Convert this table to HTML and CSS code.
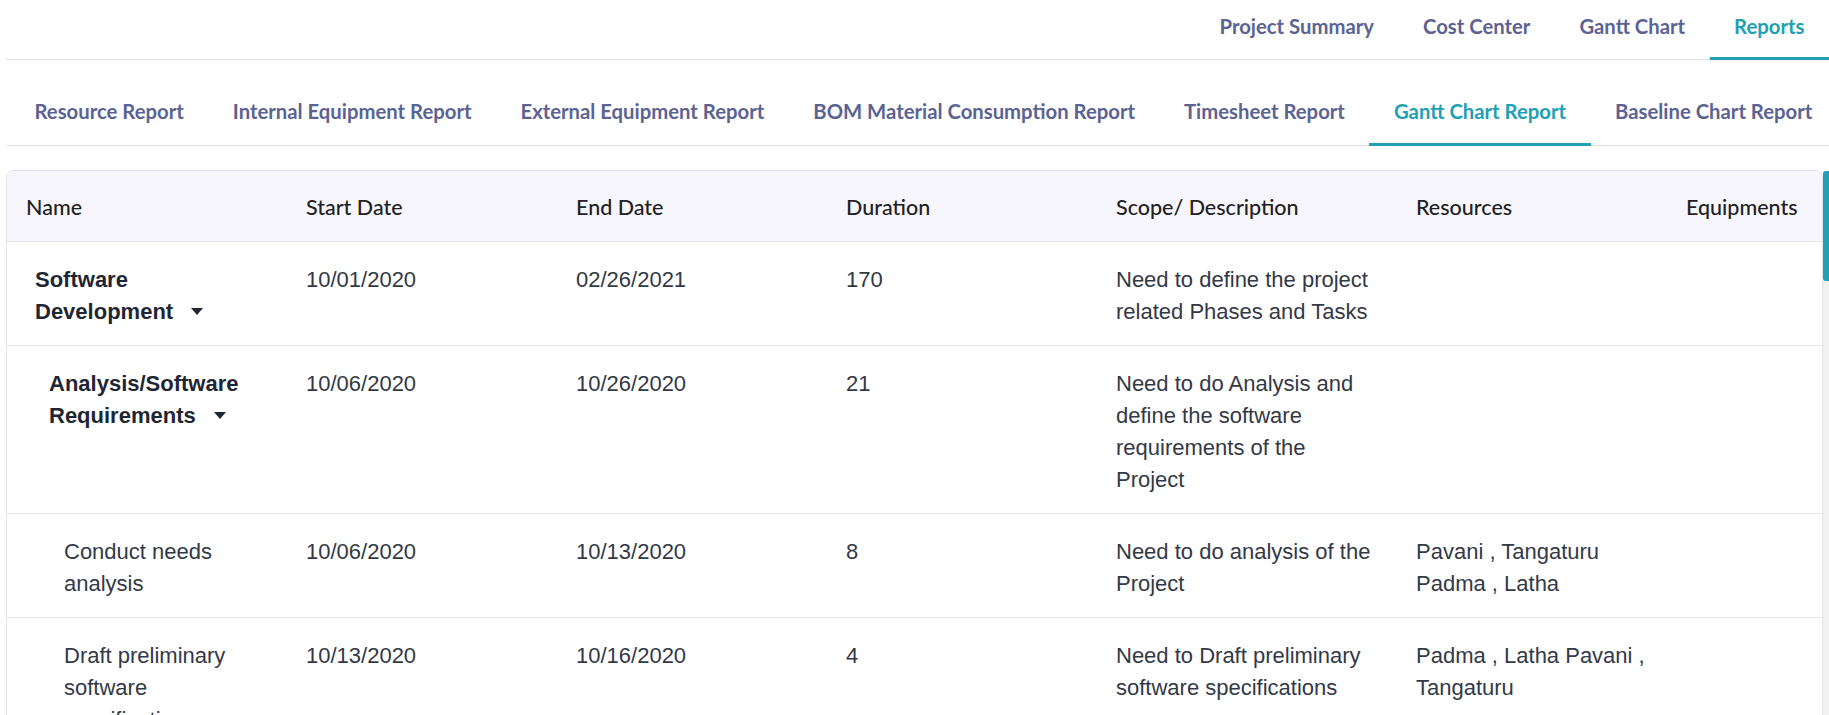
FILE: index.html
```html
<!DOCTYPE html>
<html lang="en">
<head>
<meta charset="utf-8">
<title>Gantt Chart Report</title>
<link rel="stylesheet" href="styles.css">
</head>
<body>
<div class="page">
  <nav class="main-nav">
    <a class="tab">Project Summary</a>
    <a class="tab">Cost Center</a>
    <a class="tab">Gantt Chart</a>
    <a class="tab active">Reports</a>
  </nav>
  <nav class="sub-nav">
    <a class="tab">Resource Report</a>
    <a class="tab">Internal Equipment Report</a>
    <a class="tab">External Equipment Report</a>
    <a class="tab">BOM Material Consumption Report</a>
    <a class="tab">Timesheet Report</a>
    <a class="tab active">Gantt Chart Report</a>
    <a class="tab">Baseline Chart Report</a>
  </nav>
  <div class="table-area">
    <div class="card">
      <table class="grid">
        <colgroup>
          <col class="c-name"><col class="c-date"><col class="c-date"><col class="c-dur"><col class="c-desc"><col class="c-res"><col class="c-eq">
        </colgroup>
        <thead>
          <tr>
            <th class="name-cell">Name</th>
            <th>Start Date</th>
            <th>End Date</th>
            <th>Duration</th>
            <th>Scope/ Description</th>
            <th>Resources</th>
            <th>Equipments</th>
          </tr>
        </thead>
        <tbody>
          <tr>
            <td class="name-cell"><div class="lvl lvl0 parent">Software Development<svg class="caret" viewBox="0 0 12 7" width="12" height="7"><path d="M0 0H12L6 7Z"/></svg></div></td>
            <td>10/01/2020</td>
            <td>02/26/2021</td>
            <td>170</td>
            <td class="desc-cell">Need to define the project related Phases and Tasks</td>
            <td></td>
            <td></td>
          </tr>
          <tr>
            <td class="name-cell"><div class="lvl lvl1 parent">Analysis/Software Requirements<svg class="caret" viewBox="0 0 12 7" width="12" height="7"><path d="M0 0H12L6 7Z"/></svg></div></td>
            <td>10/06/2020</td>
            <td>10/26/2020</td>
            <td>21</td>
            <td class="desc-cell">Need to do Analysis and define the software requirements of the Project</td>
            <td></td>
            <td></td>
          </tr>
          <tr>
            <td class="name-cell"><div class="lvl lvl2">Conduct needs analysis</div></td>
            <td>10/06/2020</td>
            <td>10/13/2020</td>
            <td>8</td>
            <td class="desc-cell">Need to do analysis of the Project</td>
            <td>Pavani , Tangaturu Padma , Latha</td>
            <td></td>
          </tr>
          <tr>
            <td class="name-cell"><div class="lvl lvl2">Draft preliminary software specifications</div></td>
            <td>10/13/2020</td>
            <td>10/16/2020</td>
            <td>4</td>
            <td class="desc-cell">Need to Draft preliminary software specifications</td>
            <td>Padma , Latha Pavani , Tangaturu</td>
            <td></td>
          </tr>
        </tbody>
      </table>
    </div>
    <div class="scrollbar"><div class="thumb"></div></div>
  </div>
</div>
</body>
</html>
```

FILE: styles.css
```css
html, body {
  margin: 0;
  padding: 0;
  background: #ffffff;
}
body {
  height: 100vh;
  overflow: hidden;
  font-family: "Liberation Sans", Arial, sans-serif;
}
.page {
  height: 100vh;
  display: flex;
  flex-direction: column;
  padding-left: 6px;
  box-sizing: border-box;
}
.main-nav {
  display: flex;
  justify-content: flex-end;
  border-bottom: 1px solid #e2e2e2;
  height: 59px;
}
.sub-nav {
  display: flex;
  padding-left: 4px;
  border-bottom: 1px solid #e2e2e2;
  height: 85px;
}
.tab {
  font-family: Lato, "Open Sans", sans-serif;
  font-weight: 700;
  font-size: 20.3px;
  line-height: 24px;
  color: #5b6393;
  padding: 0 24.5px;
  display: flex;
  align-items: center;
  box-sizing: border-box;
  border-bottom: 3px solid transparent;
  margin-bottom: -1px;
  white-space: nowrap;
  cursor: pointer;
}
.main-nav .tab {
  height: 60px;
  padding-bottom: 5px;
}
.sub-nav .tab {
  height: 86px;
  padding-top: 18px;
}
.tab.active {
  color: #1ea0b5;
  border-bottom-color: #1ea0b5;
}
.table-area {
  display: flex;
  margin-top: 24px;
  flex: 1;
  min-height: 0;
}
.card {
  flex: 1;
  border: 1px solid #e3e3ea;
  border-bottom: none;
  border-radius: 8px 8px 0 0;
  overflow: hidden;
}
.scrollbar {
  width: 6px;
  background: #f1f1f1;
  margin-top: 1px;
}
.thumb {
  height: 110px;
  background: #1ea0b5;
  border-radius: 3px 0 0 3px;
}
.grid {
  width: 100%;
  border-collapse: collapse;
  table-layout: fixed;
}
.c-name { width: 280px; }
.c-date { width: 270px; }
.c-dur { width: 270px; }
.c-desc { width: 300px; }
.c-res { width: 270px; }
.c-eq { width: auto; }
.grid th {
  background: #f7f6fd;
  font-family: Lato, "Open Sans", sans-serif;
  font-weight: 500;
  font-size: 21.5px;
  line-height: 28px;
  color: #212121;
  text-align: left;
  padding: 22px 10px 20px 19px;
  border-bottom: 1px solid #e3e3ea;
  white-space: nowrap;
}
.grid td {
  font-size: 22px;
  line-height: 32px;
  color: #333946;
  vertical-align: top;
  padding: 22px 10px 17px 19px;
  border-bottom: 1px solid #e3e3ea;
}
.grid td.name-cell {
  padding-right: 30px;
}
.grid td.desc-cell {
  padding-right: 22px;
}
.lvl0 { padding-left: 9px; }
.lvl1 { padding-left: 23px; }
.lvl2 { padding-left: 38px; }
.parent {
  font-weight: 700;
  color: #1f2633;
}
.caret {
  display: inline-block;
  margin-left: 18px;
  vertical-align: middle;
  fill: #1f2633;
  position: relative;
  top: -2px;
}
```
